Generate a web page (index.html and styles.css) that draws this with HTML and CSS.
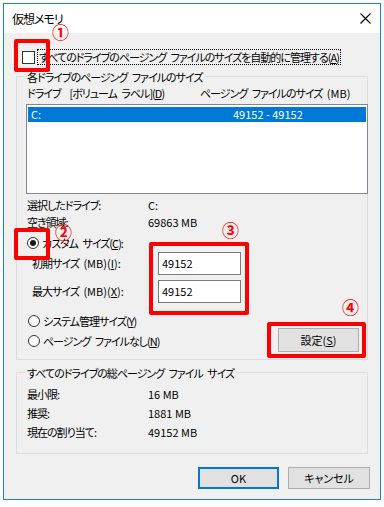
FILE: index.html
```html
<!DOCTYPE html>
<html lang="ja">
<head>
<meta charset="utf-8">
<title>仮想メモリ</title>
<link rel="stylesheet" href="styles.css">
</head>
<body>
<div class="window">
  <div class="titlebar">
    <span class="title">仮想メモリ</span>
    <svg class="close" width="11" height="11" viewBox="0 0 11 11"><path d="M0.5 0.5 L10.5 10.5 M10.5 0.5 L0.5 10.5" stroke="#000" stroke-width="1.1" fill="none"/></svg>
  </div>
  <div class="content">
    <div class="auto-row">
      <span class="checkbox"></span>
      <span class="focus-label">すべてのドライブのページング ファイルのサイズを自動的に管理する(<u>A</u>)</span>
    </div>

    <div class="group g1">
      <div class="legend">各ドライブのページング ファイルのサイズ</div>
      <div class="list-head">
        <span class="col-drive">ドライブ&nbsp; [ボリューム ラベル](<u>D</u>)</span>
        <span class="col-size">ページング ファイルのサイズ <span class="lat">(MB)</span></span>
      </div>
      <div class="listbox">
        <div class="list-row selected">
          <span class="row-drive lat">C:</span>
          <span class="row-size lat">49152 - 49152</span>
        </div>
      </div>
      <div class="info">
        <div class="kv"><span class="k">選択したドライブ:</span><span class="v lat">C:</span></div>
        <div class="kv"><span class="k">空き領域:</span><span class="v lat">69863 MB</span></div>
      </div>
      <div class="radio-row custom">
        <span class="radio checked"></span>
        <span>カスタム サイズ(<u>C</u>):</span>
      </div>
      <div class="size-grid">
        <span class="size-label">初期サイズ <span class="lat">(MB)(<u>I</u>):</span></span>
        <div class="input lat">49152</div>
        <span class="size-label">最大サイズ <span class="lat">(MB)(<u>X</u>):</span></span>
        <div class="input lat">49152</div>
      </div>
      <div class="bottom-row">
        <div class="radios">
          <div class="radio-row"><span class="radio"></span><span>システム管理サイズ(<u>Y</u>)</span></div>
          <div class="radio-row"><span class="radio"></span><span>ページング ファイルなし(<u>N</u>)</span></div>
        </div>
        <button class="btn set">設定(<u>S</u>)</button>
      </div>
    </div>

    <div class="group g2">
      <div class="legend">すべてのドライブの総ページング ファイル サイズ</div>
      <div class="totals">
        <div class="kv2"><span class="k">最小限:</span><span class="v lat">16 MB</span></div>
        <div class="kv2"><span class="k">推奨:</span><span class="v lat">1881 MB</span></div>
        <div class="kv2"><span class="k">現在の割り当て:</span><span class="v lat">49152 MB</span></div>
      </div>
    </div>

    <div class="actions">
      <button class="btn ok lat">OK</button>
      <button class="btn cancel">キャンセル</button>
    </div>
  </div>
</div>

<div class="mark box1"></div>
<div class="mark box2"></div>
<div class="mark box3"></div>
<div class="mark box4"></div>
<span class="num n1">①</span>
<span class="num n2">②</span>
<span class="num n3">③</span>
<span class="num n4">④</span>
</body>
</html>
```
FILE: styles.css
```css
* { box-sizing: border-box; }
html, body { margin: 0; padding: 0; background: #fff; }
body {
  font-family: "Noto Sans CJK JP", "Noto Sans", sans-serif;
  font-size: 11px;
  letter-spacing: -1px;
  word-spacing: 3px;
  font-feature-settings: "palt";
  color: #000;
  width: 384px;
  height: 507px;
  position: relative;
  overflow: hidden;
}
.lat { letter-spacing: 0; word-spacing: 0; }
u { text-decoration: underline; text-underline-offset: 1px; }

.window {
  margin: 3px 0 0 3px;
  width: 378px;
  height: 497px;
  border: 1px solid #1883d7;
  display: flex;
  flex-direction: column;
}
.titlebar {
  height: 29px;
  background: #fff;
  display: flex;
  align-items: center;
  justify-content: space-between;
  padding: 0 9px 0 8px;
}
.title { font-size: 12px; line-height: 16px; }
.close { display: block; flex: none; }

.content {
  flex: 1;
  background: #f0f0f0;
  display: flex;
  flex-direction: column;
}
.auto-row {
  margin-top: 16px;
  height: 16px;
  padding-left: 18px;
  display: flex;
  align-items: center;
}
.checkbox {
  flex: none;
  width: 13px;
  height: 13px;
  border: 1px solid #333;
  background: #fff;
  margin-right: 2px;
}
.focus-label {
  line-height: 14px;
  padding: 0 1px;
  border: 1px dotted #000;
  white-space: nowrap;
}

.group {
  margin: 11px 12px 0 12px;
  border: 1px solid #dcdcdc;
  padding: 0 0 0 10px;
}
.legend {
  margin: -8px 0 0 -2px;
  line-height: 16px;
  padding: 0 2px;
  background: #f0f0f0;
  width: max-content;
}
.list-head {
  height: 17px;
  line-height: 17px;
  display: flex;
}
.col-drive { width: 173px; white-space: nowrap; }
.col-size { white-space: nowrap; }
.listbox {
  margin: 2px -1px 0 -1px;
  height: 90px;
  background: #fff;
  border: 1px solid #828790;
  padding: 2px 1px;
}
.list-row {
  height: 15px;
  line-height: 15px;
  display: flex;
  padding-left: 3px;
}
.list-row.selected { background: #0078d7; color: #fff; }
.row-drive { width: 202px; }
.info { margin-top: 3px; }
.kv { display: flex; height: 17px; line-height: 17px; }
.kv .k { width: 121px; }

.radio-row {
  height: 18px;
  display: flex;
  align-items: center;
  line-height: 18px;
}
.custom { margin-top: 3px; }
.radio {
  flex: none;
  width: 12px;
  height: 12px;
  border: 1px solid #333;
  border-radius: 50%;
  background: #fff;
  margin-right: 3px;
  display: flex;
  align-items: center;
  justify-content: center;
}
.radio.checked::after {
  content: "";
  width: 6px;
  height: 6px;
  border-radius: 50%;
  background: #1a1a1a;
}
.size-grid {
  display: grid;
  grid-template-columns: 126px 83px;
  row-gap: 5px;
  padding-left: 5px;
}
.size-label { line-height: 23px; white-space: nowrap; }
.input {
  height: 23px;
  border: 1px solid #7a7a7a;
  background: #fff;
  line-height: 21px;
  padding-left: 3px;
}
.bottom-row {
  margin-top: 9px;
  display: flex;
  justify-content: space-between;
  align-items: flex-start;
  padding-right: 8px;
  padding-bottom: 7px;
}
.radios { display: flex; flex-direction: column; gap: 2px; padding-left: 1px; }

.btn {
  font: inherit;
  font-feature-settings: "palt";
  color: #000;
  background: #e1e1e1;
  border: 1px solid #adadad;
  padding: 0;
  height: 22px;
  line-height: 20px;
}
.set { margin-top: 16px; width: 81px; height: 24px; }

.g2 { margin-top: 12px; padding-bottom: 11px; }
.totals { margin-top: 4px; }
.kv2 { display: flex; height: 19px; line-height: 19px; }
.kv2 .k { width: 121px; }

.actions {
  margin: 13px 10px 0 0;
  display: flex;
  justify-content: flex-end;
  gap: 9px;
}
.ok { width: 81px; border: 2px solid #0078d7; line-height: 18px; }
.cancel { width: 82px; }

/* red annotation overlays */
.mark {
  position: absolute;
  border: 4px solid #ff0000;
  border-radius: 2px;
}
.box1 { left: 14px; top: 39px; width: 36px; height: 33px; }
.box2 { left: 14px; top: 228px; width: 36px; height: 32px; }
.box3 { left: 149px; top: 242px; width: 100px; height: 73px; }
.box4 { left: 267px; top: 322px; width: 99px; height: 36px; }
.num {
  position: absolute;
  color: #ff0000;
  font-family: "Noto Sans CJK JP", sans-serif;
  font-weight: 700;
  font-size: 17px;
  line-height: 17px;
  letter-spacing: 0;
}
.n1 { left: 52px; top: 23px; }
.n2 { left: 55px; top: 223px; }
.n3 { left: 222px; top: 221px; }
.n4 { left: 342px; top: 298px; }
```
